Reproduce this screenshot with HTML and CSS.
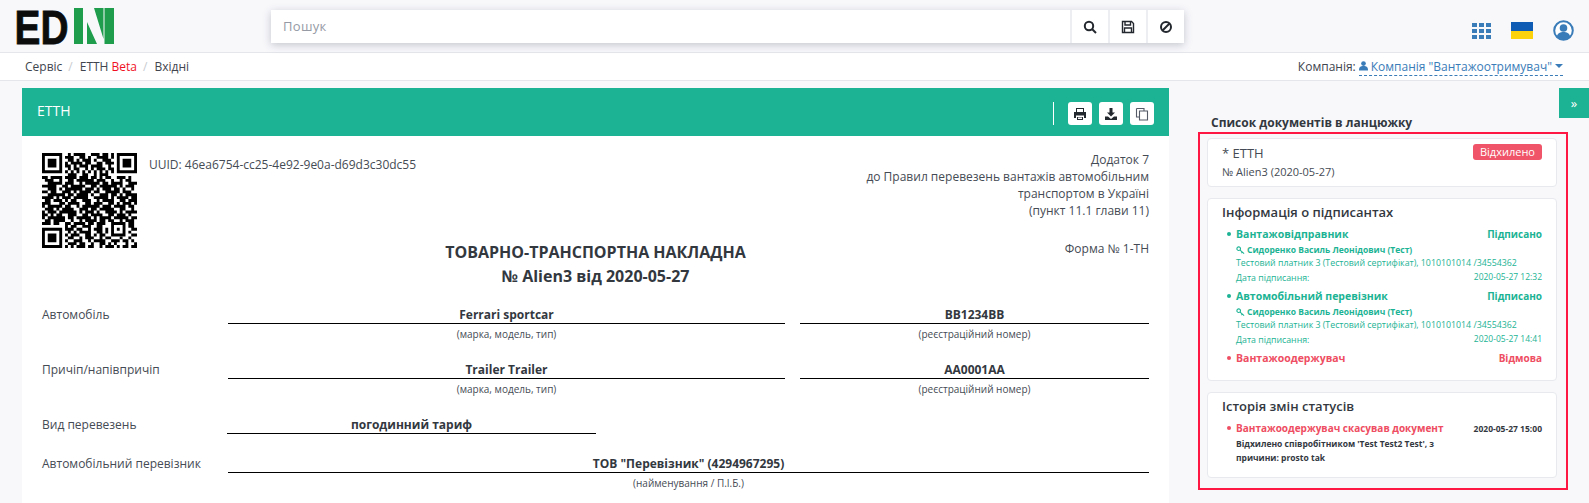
FILE: index.html
```html
<!DOCTYPE html>
<html lang="uk">
<head>
<meta charset="utf-8">
<title>ЕТТН</title>
<link rel="stylesheet" href="styles.css">
</head>
<body>
<header class="topbar">
  <svg class="logo" viewBox="0 0 98 36" width="98" height="36">
    <text class="logo-text" x="-1.5" y="35.600" textLength="54" lengthAdjust="spacingAndGlyphs">ED</text>
    <path class="logo-n" d="M58 0h9v36h-9zM71 14V36H81zM78 0H87.500V31zM88.500 0H98V36H88.500z"/>
  </svg>
  <div class="search">
    <div class="search-input">Пошук</div>
    <button class="search-btn"><svg viewBox="0 0 14 14" width="14" height="14"><circle class="st2" cx="6" cy="6" r="4.200"/><path class="st2" d="M9 9l4 4"/></svg></button>
    <button class="search-btn"><svg viewBox="0 0 14 14" width="14" height="14"><path class="st1" d="M1.500 1.500h9l2 2v9h-11z"/><path class="st1" d="M4 1.500v3.500h5.500v-3.500M3.500 12.500v-4.500h7v4.500"/></svg></button>
    <button class="search-btn"><svg viewBox="0 0 14 14" width="14" height="14"><circle class="st2" cx="7" cy="7" r="5"/><path class="st2" d="M3.500 10.500l7-7"/></svg></button>
  </div>
  <div class="top-icons">
    <svg viewBox="0 0 19 16" width="19" height="16"><path class="blue" d="M0 0h5v4H0zM7 0h5v4H7zM14 0h5v4h-5zM0 6h5v4H0zM7 6h5v4H7zM14 6h5v4h-5zM0 12h5v4H0zM7 12h5v4H7zM14 12h5v4h-5z"/></svg>
    <div class="flag"></div>
    <svg viewBox="0 0 21 21" width="21" height="21"><circle class="user-ring" cx="10.500" cy="10.500" r="9.300"/><circle class="blue" cx="10.500" cy="8" r="3.800"/><path class="blue" d="M3.800 16.500c1-3.500 3.500-4.500 6.700-4.500s5.700 1 6.700 4.500c-3.500 3.500-9.900 3.500-13.400 0z"/></svg>
  </div>
</header>

<nav class="crumbs">
  <div class="crumb-list">
    <span>Сервіс</span><span class="sep">/</span>
    <span>ЕТТН <span class="beta">Beta</span></span><span class="sep">/</span>
    <span>Вхідні</span>
  </div>
  <div class="company">
    <span>Компанія:</span>
    <span class="company-link">
      <svg viewBox="0 0 10 11" width="9" height="10"><circle class="blue" cx="5" cy="2.800" r="2.600"/><path class="blue" d="M0 10.500c0-4 1.500-5 5-5s5 1 5 5z"/></svg>
      Компанія "Вантажоотримувач"
      <span class="caret"></span>
    </span>
  </div>
</nav>

<main class="main">
  <section class="doc-card">
    <div class="doc-head">
      <span class="doc-title">ЕТТН</span>
      <div class="doc-actions">
        <span class="vline"></span>
        <button class="act"><svg viewBox="0 0 14 14" width="14" height="14"><path class="dark" d="M3 1h8v4H3zM1 5h12v6h-2V8.500H3V11H1zM4 10h6v3H4z"/><path class="white" d="M4 2h6v3H4zM5 10.500h4v1.500H5z"/></svg></button>
        <button class="act"><svg viewBox="0 0 14 14" width="14" height="14"><path class="dark" d="M5.500 1h3v4.500H11L7 9.500 3 5.500h2.500zM1 9.500h3l3 2.500 3-2.500h3V13H1z"/></svg></button>
        <button class="act"><svg viewBox="0 0 14 14" width="14" height="14"><path class="st1 thin" d="M1.500 1.500h7.500v2M1.500 1.500v8.500h2.500M4.500 4h8v9h-8z"/></svg></button>
      </div>
    </div>
    <div class="doc-body">
      <div class="doc-top">
        <svg class="qr" viewBox="0 0 33 33" width="95" height="95">
          <path class="qr-fill" d="M0 0h7v7H0zM1 1v5h5V1zM2 2h3v3H2zM26 0h7v7h-7zM27 1v5h5V1zM28 2h3v3h-3zM0 26h7v7H0zM1 27v5h5v-5zM2 28h3v3H2zM24 24h5v5h-5zM25 25v3h3v-3zM26 26h1v1h-1z"/>
          <path class="qr-mod" d="M9 .5h1M11 .5h4M17 .5h3M21 .5h2M24 .5h1M8 1.500h3M13 1.500h2M16 1.500h1M19 1.500h4M24 1.500h1M9 2.500h2M12 2.500h1M14 2.500h3M18 2.500h1M21 2.500h3M8 3.500h1M10 3.500h4M15 3.500h2M19 3.500h2M22 3.500h3M8 4.500h2M11 4.500h1M13 4.500h3M17 4.500h4M23 4.500h1M9 5.500h1M11 5.500h2M15 5.500h1M17 5.500h1M19 5.500h3M23 5.500h2M8 6.500h1M10 6.500h1M12 6.500h1M14 6.500h1M16 6.500h1M18 6.500h1M20 6.500h1M22 6.500h1M24 6.500h1M9 7.500h3M14 7.500h2M18 7.500h1M20 7.500h3M0 8.500h2M3 8.500h4M8 8.500h4M13 8.500h3M17 8.500h2M20 8.500h1M22 8.500h2M26 8.500h3M30 8.500h1M1 9.500h3M6 9.500h1M9 9.500h2M12 9.500h6M19 9.500h3M24 9.500h1M27 9.500h1M29 9.500h2M2 10.500h5M8 10.500h3M13 10.500h1M15 10.500h5M21 10.500h2M24 10.500h4M30 10.500h3M0 11.500h5M7 11.500h2M10 11.500h5M17 11.500h2M20 11.500h6M27 11.500h1M29 11.500h3M2 12.500h3M6 12.500h1M8 12.500h6M15 12.500h3M19 12.500h1M21 12.500h3M25 12.500h2M28 12.500h1M31 12.500h1M0 13.500h2M3 13.500h2M7 13.500h3M11 13.500h1M13 13.500h4M18 13.500h2M22 13.500h5M28 13.500h3M2 14.500h6M9 14.500h2M12 14.500h4M17 14.500h1M20 14.500h3M24 14.500h2M27 14.500h1M29 14.500h4M0 15.500h4M5 15.500h1M7 15.500h3M11 15.500h5M18 15.500h5M24 15.500h1M26 15.500h4M31 15.500h2M1 16.500h2M4 16.500h3M8 16.500h1M10 16.500h2M14 16.500h3M19 16.500h1M21 16.500h4M27 16.500h2M30 16.500h3M0 17.500h3M6 17.500h2M9 17.500h4M15 17.500h2M18 17.500h3M23 17.500h2M26 17.500h1M28 17.500h3M32 17.500h1M0 18.500h1M2 18.500h5M8 18.500h2M12 18.500h1M14 18.500h6M21 18.500h3M25 18.500h4M30 18.500h2M1 19.500h3M5 19.500h1M7 19.500h4M13 19.500h3M17 19.500h2M20 19.500h5M27 19.500h2M31 19.500h1M0 20.500h1M2 20.500h3M6 20.500h6M13 20.500h1M15 20.500h3M19 20.500h1M22 20.500h4M27 20.500h1M29 20.500h4M0 21.500h2M3 21.500h1M5 21.500h2M9 21.500h3M14 21.500h2M17 21.500h4M23 21.500h2M26 21.500h3M30 21.500h1M0 22.500h1M2 22.500h6M9 22.500h2M12 22.500h5M18 22.500h1M20 22.500h4M25 22.500h5M31 22.500h2M1 23.500h2M4 23.500h4M10 23.500h1M13 23.500h1M15 23.500h4M20 23.500h2M23 23.500h2M27 23.500h1M29 23.500h3M0 24.500h3M4 24.500h2M8 24.500h2M11 24.500h4M16 24.500h2M19 24.500h3M30 24.500h2M8 25.500h1M10 25.500h2M14 25.500h3M19 25.500h2M30 25.500h2M8 26.500h3M12 26.500h2M16 26.500h1M18 26.500h3M22 26.500h1M31 26.500h2M9 27.500h1M11 27.500h1M13 27.500h4M19 27.500h2M22 27.500h1M30 27.500h1M8 28.500h1M10 28.500h3M15 28.500h2M18 28.500h1M20 28.500h2M31 28.500h2M9 29.500h2M13 29.500h1M15 29.500h3M20 29.500h1M22 29.500h2M27 29.500h1M30 29.500h1M8 30.500h1M11 30.500h3M16 30.500h1M18 30.500h4M24 30.500h3M28 30.500h2M31 30.500h1M9 31.500h3M13 31.500h2M17 31.500h1M20 31.500h2M23 31.500h1M25 31.500h1M29 31.500h1M32 31.500h1M8 32.500h1M10 32.500h1M12 32.500h3M16 32.500h2M20 32.500h1M22 32.500h3M26 32.500h1M28 32.500h2M31 32.500h2"/>
        </svg>
        <div class="uuid">UUID: 46ea6754-cc25-4e92-9e0a-d69d3c30dc55</div>
        <div class="appendix">Додаток 7<br>до Правил перевезень вантажів автомобільним<br>транспортом в Україні<br>(пункт 11.1 глави 11)</div>
      </div>
      <div class="title-row">
        <span></span>
        <h1 class="doc-heading">ТОВАРНО-ТРАНСПОРТНА НАКЛАДНА<br>№ Alien3 від 2020-05-27</h1>
        <div class="form-no">Форма № 1-ТН</div>
      </div>
      <div class="row">
        <div class="row-label">Автомобіль</div>
        <div class="field field-wide"><div class="value">Ferrari sportcar</div><div class="caption">(марка, модель, тип)</div></div>
        <div class="field field-num"><div class="value">BB1234BB</div><div class="caption">(реєстраційний номер)</div></div>
      </div>
      <div class="row">
        <div class="row-label">Причіп/напівпричіп</div>
        <div class="field field-wide"><div class="value">Trailer Trailer</div><div class="caption">(марка, модель, тип)</div></div>
        <div class="field field-num"><div class="value">AA0001AA</div><div class="caption">(реєстраційний номер)</div></div>
      </div>
      <div class="row row-plain">
        <div class="row-label">Вид перевезень</div>
        <div class="field field-short"><div class="value">погодинний тариф</div></div>
      </div>
      <div class="row row-last">
        <div class="row-label">Автомобільний перевізник</div>
        <div class="field field-wide"><div class="value">ТОВ "Перевізник" (4294967295)</div><div class="caption">(найменування / П.І.Б.)</div></div>
      </div>
    </div>
  </section>

  <aside class="side">
    <h2 class="side-title">Список документів в ланцюжку</h2>
    <div class="highlight">
      <div class="panel panel-doc">
        <div class="panel-doc-top"><span class="panel-doc-name">* ЕТТН</span><span class="badge">Відхилено</span></div>
        <div class="panel-doc-no">№ Alien3 (2020-05-27)</div>
      </div>
      <div class="panel panel-signers">
        <h3 class="panel-heading">Інформація о підписантах</h3>
        <div class="signer ok">
          <div class="signer-head"><span class="dot"></span><span>Вантажовідправник</span><span class="status">Підписано</span></div>
          <div class="signer-person"><svg viewBox="0 0 10 10" width="9" height="9"><circle class="key" cx="3" cy="3" r="2"/><path class="key" d="M4.500 4.500L9 8.500M7 6.800l-1 1"/></svg>Сидоренко Василь Леонідович (Тест)</div>
          <div class="signer-line">Тестовий платник 3 (Тестовий сертифікат), 1010101014 /34554362</div>
          <div class="signer-date"><span>Дата підписання:</span><span class="date">2020-05-27 12:32</span></div>
        </div>
        <div class="signer ok">
          <div class="signer-head"><span class="dot"></span><span>Автомобільний перевізник</span><span class="status">Підписано</span></div>
          <div class="signer-person"><svg viewBox="0 0 10 10" width="9" height="9"><circle class="key" cx="3" cy="3" r="2"/><path class="key" d="M4.500 4.500L9 8.500M7 6.800l-1 1"/></svg>Сидоренко Василь Леонідович (Тест)</div>
          <div class="signer-line">Тестовий платник 3 (Тестовий сертифікат), 1010101014 /34554362</div>
          <div class="signer-date"><span>Дата підписання:</span><span class="date">2020-05-27 14:41</span></div>
        </div>
        <div class="signer bad">
          <div class="signer-head"><span class="dot"></span><span>Вантажоодержувач</span><span class="status">Відмова</span></div>
        </div>
      </div>
      <div class="panel panel-history">
        <h3 class="panel-heading">Історія змін статусів</h3>
        <div class="history">
          <div class="history-main">
            <div class="signer-head history-head"><span class="dot"></span><span>Вантажоодержувач скасував документ</span></div>
            <div class="history-text">Відхилено співробітником 'Test Test2 Test', з причини: prosto tak</div>
          </div>
          <div class="history-date">2020-05-27 15:00</div>
        </div>
      </div>
    </div>
  </aside>
  <button class="toggle">»</button>
</main>
</body>
</html>
```

FILE: styles.css
```css
* { box-sizing: border-box; }
html, body { margin: 0; height: 503px; overflow: hidden; }
body {
  background: #f8f8fb;
  color: #454b54;
  font-family: "Open Sans", "Noto Sans", sans-serif;
  font-size: 12px;
  line-height: 17px;
}
button { font: inherit; border: 0; padding: 0; cursor: pointer; }
svg { display: block; flex: none; }

.st1 { fill: none; stroke: #23272e; stroke-width: 1.4; }
.st1.thin { stroke: #555b66; stroke-width: 1.1; }
.st2 { fill: none; stroke: #23272e; stroke-width: 2; }
.blue { fill: #3a7cb8; }
.dark { fill: #23272e; }
.white { fill: #fff; }
.user-ring { fill: #fff; stroke: #3a7cb8; stroke-width: 2; }

.topbar {
  height: 53px;
  display: flex;
  align-items: flex-start;
  padding: 8px 15px 0 16px;
  border-bottom: 1px solid #e4e6eb;
}
.logo { margin-right: 157px; overflow: visible; }
.logo-text { font-family: "Liberation Sans", sans-serif; font-weight: 700; font-size: 48px; fill: #0c0c0c; stroke: #0c0c0c; stroke-width: .8; }
.logo-n { fill: #1f9d4d; }
.search {
  width: 913px;
  height: 33px;
  margin-top: 2px;
  display: flex;
  background: #fff;
  box-shadow: 0 2px 8px rgba(60, 70, 90, .28);
}
.search-input { flex: 1; padding: 7px 12px; font-size: 13px; line-height: 18px; color: #959aa5; letter-spacing: .3px; }
.search-btn {
  width: 38px;
  background: #fff;
  border-left: 2px solid #eceef1;
  display: flex;
  align-items: center;
  justify-content: center;
}
.top-icons { margin-left: auto; display: flex; align-items: center; gap: 20px; height: 21px; margin-top: 12px; }
.flag { width: 22px; height: 17px; background: linear-gradient(#0f5cb5 50%, #fbd20c 50%); }

.crumbs {
  height: 28px;
  background: #fff;
  border-bottom: 1px solid #e4e6eb;
  display: flex;
  justify-content: space-between;
  align-items: center;
  padding: 0 26px 0 25px;
  color: #40454e;
}
.crumb-list { display: flex; gap: 6px; }
.sep { color: #c8cbd0; margin-right: 1px; }
.beta { color: #f00f1f; }
.company { display: flex; gap: 3px; }
.company-link {
  display: flex;
  align-items: center;
  gap: 3px;
  color: #3a7cb8;
  border-bottom: 1px dashed #3a7cb8;
  height: 18px;
}
.caret { width: 0; height: 0; border: 4px solid transparent; border-top-color: #3a7cb8; border-bottom: 0; }

.main { position: relative; display: flex; height: 422px; }
.doc-card { width: 1147px; height: 422px; margin: 7px 0 0 22px; }
.doc-head {
  height: 48px;
  background: #1bb394;
  color: #fff;
  display: flex;
  align-items: center;
  justify-content: space-between;
  padding: 0 15px;
}
.doc-title { font-size: 14px; font-weight: 400; margin-top: -4px; }
.doc-actions { display: flex; align-items: center; gap: 7px; margin-top: 3px; }
.vline { width: 1px; height: 23px; background: #fff; margin-right: 7px; }
.act {
  width: 24px;
  height: 23px;
  background: #fff;
  border-radius: 3px;
  display: flex;
  align-items: center;
  justify-content: center;
}
.doc-body { background: #fff; padding: 17px 20px 0 20px; height: 367px; }
.doc-top { display: flex; height: 84px; }
.qr { margin-right: 12px; }
.qr-fill { fill: #000; }
.qr-mod { fill: none; stroke: #000; stroke-width: 1; }
.uuid { flex: 1; margin-top: 3px; }
.appendix { text-align: right; margin-top: -2px; }
.title-row { display: grid; grid-template-columns: 1fr auto 1fr; height: 69px; }
.doc-heading { margin: 3px 0 0; text-align: center; font-size: 16px; line-height: 24px; font-weight: 700; color: #33383f; }
.form-no { text-align: right; margin-top: 3px; }

.row { display: flex; margin-bottom: 17px; }
.row-plain { margin-bottom: 21px; }
.row-last { margin-bottom: 0; }
.row-label { width: 186px; flex: none; }
.field { text-align: center; }
.field-wide { flex: 1; }
.field-num { width: 349px; margin-left: 15px; }
.field-short { width: 369px; margin-left: -1px; }
.value { font-weight: 700; color: #33383f; border-bottom: 1px solid #000; height: 18px; }
.caption { font-size: 10px; height: 20px; line-height: 20px; }

.side { padding: 34px 0 0 29px; width: 399px; }
.side-title { margin: 0 0 1px 13px; font-size: 12px; line-height: 16px; font-weight: 700; color: #33383f; }
.highlight { width: 370px; height: 358px; border: 2px solid #ff1744; padding: 4px 9px 0 7px; display: flex; flex-direction: column; gap: 11px; }
.panel { background: #fff; border: 1px solid #e7e9ee; border-radius: 4px; padding: 0 14px; }
.panel-doc { height: 49px; padding-top: 3px; }
.panel-doc-top { display: flex; justify-content: space-between; height: 21px; }
.panel-doc-name { font-size: 13px; line-height: 22px; }
.badge { background: #ef5468; color: #fff; border-radius: 3px; height: 16px; line-height: 15px; font-size: 11px; padding: 0 7px; margin-top: 2px; }
.panel-doc-no { font-size: 11px; line-height: 15px; margin-top: 1px; }
.panel-signers { height: 183px; padding-top: 4px; }
.panel-history { height: 86px; padding-top: 4px; }
.panel-heading { margin: 0 0 5px; font-size: 13px; line-height: 18px; font-weight: 600; color: #33383f; }
.signer { margin-bottom: 3px; font-size: 8.8px; line-height: 14px; padding-left: 14px; }
.signer.ok { color: #1bb394; }
.signer.bad { color: #ee4d62; }
.signer-head { display: flex; font-size: 10.5px; line-height: 16px; font-weight: 700; position: relative; margin-left: -14px; padding-left: 14px; }
.dot { position: absolute; left: 5px; top: 6px; width: 4px; height: 4px; border-radius: 50%; background: currentColor; }
.status { margin-left: auto; font-size: 10px; font-weight: 700; }
.signer-person { display: flex; align-items: center; gap: 2px; font-size: 8.5px; font-weight: 700; margin-top: 1px; }
.key { fill: none; stroke: #1bb394; stroke-width: 1.200; }
.signer-line { margin-top: -1px; }
.signer-date { display: flex; justify-content: space-between; margin-top: 1px; }
.date { margin-top: -1px; font-size: 8.500px; }
.history { display: flex; justify-content: space-between; }
.history-main { width: 226px; }
.history-head { color: #ee4d62; white-space: nowrap; margin-left: 0; font-size: 10px; font-weight: 700; }
.history-text { font-size: 8.5px; line-height: 14px; font-weight: 700; color: #33383f; padding-left: 14px; margin-top: 1px; }
.history-date { font-size: 8.5px; font-weight: 700; color: #33383f; line-height: 14px; margin-top: 2px; }
.toggle { position: absolute; right: 0; top: 7px; width: 30px; height: 30px; background: #1bb394; color: #fff; font-size: 13px; line-height: 26px; }
```
